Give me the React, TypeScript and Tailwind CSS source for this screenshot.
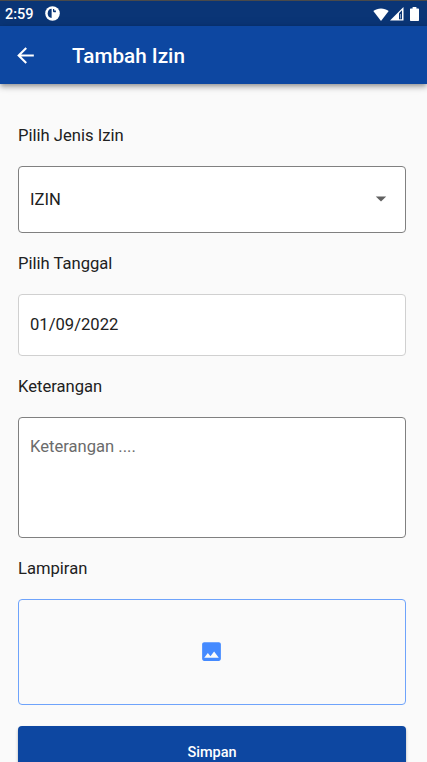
import React from 'react';

const StatusBar: React.FC = () => (
  <div className="h-[26px] shrink-0 flex items-center justify-between bg-[#0a3576] border-t border-[#4a4a4a] pl-[5px] pr-[8px] text-white">
    <div className="flex items-center">
      <span className="w-[40px] pt-[3px] text-[14.5px] leading-none font-medium">2:59</span>
      <svg className="w-[15px] h-[15px]" viewBox="0 0 15 15">
        <circle cx="7.5" cy="7.5" r="7.3" fill="white" />
        <path d="M6.6 2.8v9.1C4.3 11.9 2.7 10.2 2.7 7.5S4.3 2.8 6.6 2.8z" fill="#0a3576" />
        <path d="M8 3h1.2v1.6h1.7v1.7H9.3C8.5 6.3 8 5.7 8 5z" fill="#0a3576" />
      </svg>
    </div>
    <div className="flex items-center pt-px">
      <svg className="w-[16px] h-[13px]" viewBox="0 0 16 13">
        <path d="M.3 3.1C4.6-.5 11.4-.5 15.7 3.1L8 13z" fill="white" />
      </svg>
      <svg className="w-[14px] h-[14px] ml-px" viewBox="0 0 14 14">
        <path d="M0 13.5L13.5 0v13.5z" fill="white" />
        <path d="M9 6.2l3-3v9.1H9z" fill="#0a3576" />
        <path d="M10 7h1v4.5h-1z" fill="#8aa2c8" />
      </svg>
      <svg className="w-[9px] h-[14px] ml-[6px]" viewBox="0 0 9 14">
        <path d="M2.6 0h3.8v1.4h1.9q.7 0 .7.7v11.2q0 .7-.7.7H.7q-.7 0-.7-.7V2.1q0-.7.7-.7h1.9z" fill="white" />
      </svg>
    </div>
  </div>
);

const Header: React.FC = () => (
  <header className="relative z-10 h-[58px] shrink-0 flex items-center bg-[#0d47a1] pl-[13px] text-white shadow-[0_2px_4px_-1px_rgba(0,0,0,0.25),0_4px_5px_rgba(0,0,0,0.16),0_1px_10px_rgba(0,0,0,0.12)]">
    <button className="w-[59px]" aria-label="Kembali">
      <svg className="w-[25px] h-[25px]" viewBox="0 0 24 24" fill="currentColor">
        <path d="M20 11H7.830l5.590-5.590L12 4l-8 8 8 8 1.410-1.410L7.830 13H20v-2z" />
      </svg>
    </button>
    <h1 className="text-[20.7px] leading-6 font-medium pt-[2px]">Tambah Izin</h1>
  </header>
);

const Label: React.FC<{ children: React.ReactNode }> = ({ children }) => (
  <div className="h-[61px] flex items-center text-[16.6px] leading-5">{children}</div>
);

export default function App() {
  return (
    <div className="h-[762px] overflow-hidden flex flex-col bg-[#fafafa] font-[Roboto,sans-serif] text-[#212121]">
      <StatusBar />
      <Header />
      <main className="pl-[18px] pr-[21px] pt-[21px] flex flex-col">
        <Label>Pilih Jenis Izin</Label>
        <div className="h-[67px] flex items-center justify-between rounded-[4px] border border-[#808080] bg-white pl-[11px] pr-[18px] text-[16.6px]">
          <span className="pt-px">IZIN</span>
          <svg className="w-[12px] h-[6px] mb-[2px]" viewBox="0 0 12 6">
            <path d="M.8.4h10.4L6 5.6z" fill="#616161" />
          </svg>
        </div>

        <Label>Pilih Tanggal</Label>
        <div className="h-[62px] flex items-center rounded-[4px] border border-[#d0d0d0] bg-white pl-[11px] text-[16.6px]">
          01/09/2022
        </div>

        <Label>Keterangan</Label>
        <div className="h-[121px] rounded-[4px] border border-[#808080] bg-white pl-[11px] pt-[19px] text-[16.6px] leading-5 text-[#6b6b6b]">
          Keterangan ....
        </div>

        <Label>Lampiran</Label>
        <div className="h-[106px] flex items-center justify-center rounded-[4px] border border-[#6ea3fb]">
          <svg className="w-[25px] h-[25px] mb-px mr-px" viewBox="0 0 24 24" fill="#448aff">
            <path d="M21 19V5c0-1.1-.9-2-2-2H5c-1.1 0-2 .9-2 2v14c0 1.1.9 2 2 2h14c1.1 0 2-.9 2-2zM8.5 13.5l2.5 3.010L14.5 12l4.500 6H5l3.500-4.500z" />
          </svg>
        </div>

        <button className="mt-[21px] h-[52px] rounded-[4px] bg-[#0d47a1] pt-px text-[14.5px] font-medium text-white shadow-[0_2px_3px_rgba(0,0,0,0.3)]">
          Simpan
        </button>
      </main>
    </div>
  );
}
